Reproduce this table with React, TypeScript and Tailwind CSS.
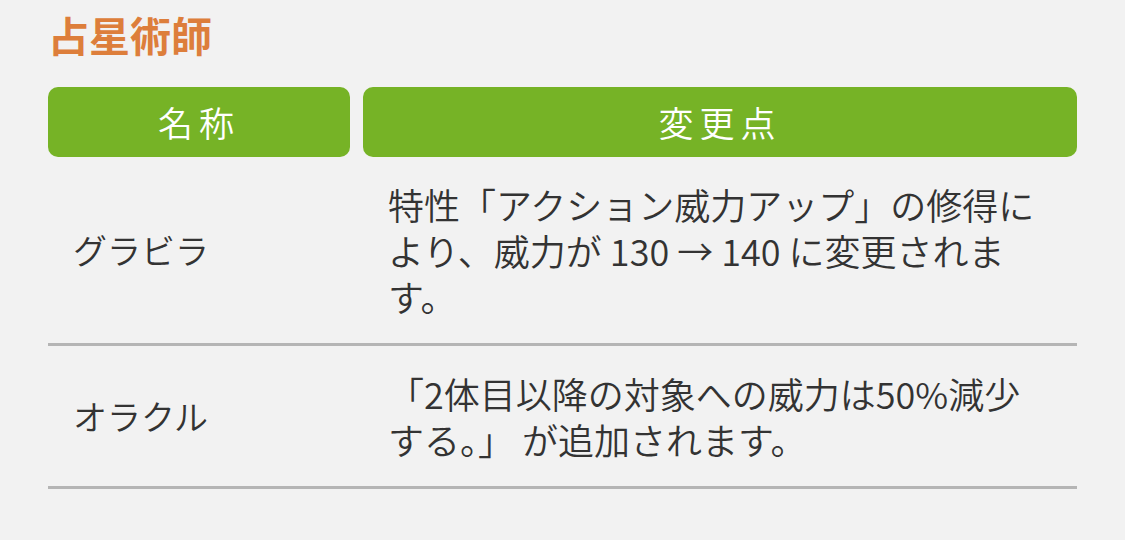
const rows = [
  {
    name: "グラビラ",
    lines: ["特性「アクション威力アップ」の修得に", "より、威力が 130 → 140 に変更されま", "す。"],
  },
  {
    name: "オラクル",
    lines: ["「2体目以降の対象への威力は50%減少", "する。」 が追加されます。"],
  },
];

export default function App() {
  return (
    <div
      className="min-h-screen w-full bg-[#f2f2f2] px-12 pt-[12px] text-[#333333]"
      style={{ fontFamily: '"Noto Sans CJK JP", "Noto Sans", sans-serif' }}
    >
      <h1 className="mb-[31px] text-[41px] font-bold leading-[44px] text-[#dd7e3b]">占星術師</h1>

      <div className="grid grid-cols-[302px_1fr] gap-x-[13px]">
        <div className="flex h-[70px] items-center justify-center rounded-[10px] bg-[#76b326] text-[35px] font-[350] tracking-[0.17em] text-white">
          名称
        </div>
        <div className="flex h-[70px] items-center justify-center rounded-[10px] bg-[#76b326] text-[35px] font-[350] tracking-[0.17em] text-white">
          変更点
        </div>
      </div>

      <div>
        {rows.map((row) => (
          <div
            key={row.name}
            className="grid grid-cols-[302px_1fr] gap-x-[13px] border-b-[3px] border-[#b5b5b5] py-6"
          >
            <div className="flex items-center pl-[25px] text-[34px] font-[350] leading-[46px]">{row.name}</div>
            <div className="pl-[25px] text-[36px] font-[350] leading-[46px] whitespace-nowrap">
              {row.lines.map((line, i) => (
                <div key={i}>{line}</div>
              ))}
            </div>
          </div>
        ))}
      </div>
    </div>
  );
}
